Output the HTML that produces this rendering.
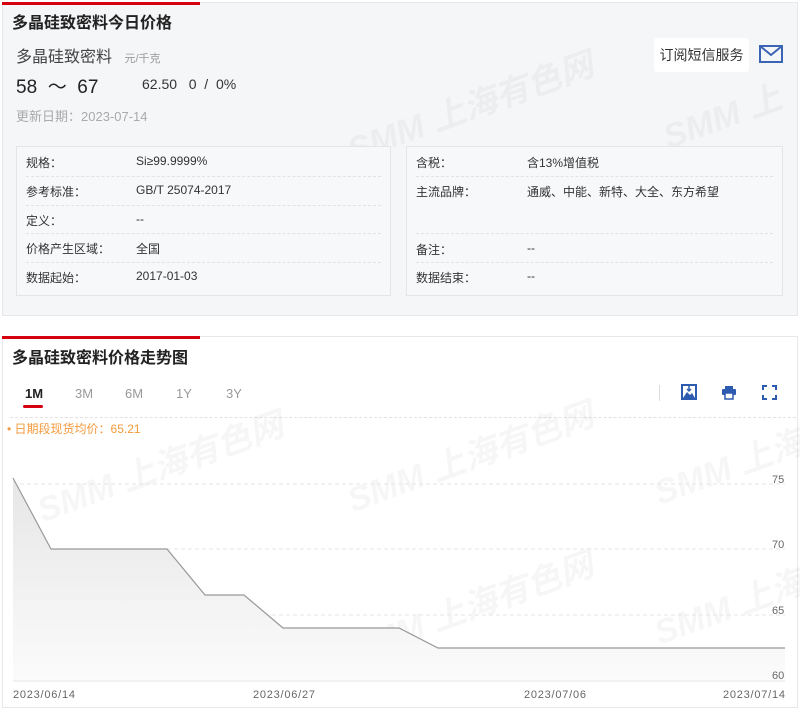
<!DOCTYPE html>
<html><head><meta charset="utf-8"><style>
*{margin:0;padding:0;box-sizing:border-box}
body{width:800px;height:708px;background:#fff;font-family:"Liberation Sans","Noto Sans CJK SC",sans-serif;color:#333;position:relative;overflow:hidden}
.abs{position:absolute}
.p1{left:2px;top:2px;width:796px;height:314px;background:#f5f6f8;border:1px solid #e6e8eb}
.red{height:3px;background:#d7000f;width:198px}
.tbl{background:#f7f8fa;border:1px solid #e3e5e8}
.row{position:absolute;font-size:12px;color:#333}
.dash{position:absolute;height:0;border-top:1px dashed #e2e2e2}
.wm{position:absolute;font-size:34px;font-weight:bold;color:rgba(0,0,0,0.035);transform:rotate(-20deg);white-space:nowrap;font-style:italic}
</style></head><body>
<div class="abs p1"></div>
<div class="abs red" style="left:2px;top:2px"></div>
<div class="wm" style="left:340px;top:80px">SMM 上海有色网</div>
<div class="wm" style="left:660px;top:90px">SMM 上</div>
<div class="abs" style="left:12px;top:9px;font-size:16px;font-weight:bold;color:#222">多晶硅致密料今日价格</div>
<div class="abs" style="left:16px;top:43px;font-size:16px;color:#444">多晶硅致密料 <span style="font-size:11px;color:#999;margin-left:8px">元/千克</span></div>
<div class="abs" style="left:16px;top:72px;font-size:19px;color:#222">58 &nbsp;～ &nbsp;67</div>
<div class="abs" style="left:142px;top:76px;font-size:14px;color:#333">62.50 &nbsp; 0 &nbsp;/ &nbsp;0%</div>
<div class="abs" style="left:16px;top:106px;font-size:13px;color:#aaa">更新日期：2023-07-14</div>
<div class="abs" style="left:654px;top:38px;width:95px;height:34px;background:#fff;border-radius:3px;font-size:14px;line-height:34px;text-align:center;color:#333">订阅短信服务</div>
<svg class="abs" style="left:759px;top:45px" width="24" height="18" viewBox="0 0 24 18"><rect x="1" y="1" width="22" height="16" fill="none" stroke="#3b64b4" stroke-width="2"/><path d="M1 1L12 10L23 1" fill="none" stroke="#3b64b4" stroke-width="2"/></svg>
<div class="abs tbl" style="left:16px;top:146px;width:375px;height:150px"></div>
<div class="abs tbl" style="left:406px;top:146px;width:377px;height:150px"></div>
<div class="dash" style="left:26px;top:176px;width:355px"></div><div class="dash" style="left:26px;top:205px;width:355px"></div><div class="dash" style="left:26px;top:233px;width:355px"></div><div class="dash" style="left:26px;top:262px;width:355px"></div>
<div class="dash" style="left:416px;top:176px;width:357px"></div><div class="dash" style="left:416px;top:233px;width:357px"></div><div class="dash" style="left:416px;top:262px;width:357px"></div>
<div class="row" style="left:26px;top:154px">规格：</div><div class="row" style="left:136px;top:154px">Si≥99.9999%</div>
<div class="row" style="left:26px;top:183px">参考标准：</div><div class="row" style="left:136px;top:183px">GB/T 25074-2017</div>
<div class="row" style="left:26px;top:212px">定义：</div><div class="row" style="left:136px;top:212px">--</div>
<div class="row" style="left:26px;top:240px">价格产生区域：</div><div class="row" style="left:136px;top:240px">全国</div>
<div class="row" style="left:26px;top:269px">数据起始：</div><div class="row" style="left:136px;top:269px">2017-01-03</div>
<div class="row" style="left:416px;top:154px">含税：</div><div class="row" style="left:527px;top:154px">含13%增值税</div>
<div class="row" style="left:416px;top:183px">主流品牌：</div><div class="row" style="left:527px;top:183px">通威、中能、新特、大全、东方希望</div>
<div class="row" style="left:416px;top:241px">备注：</div><div class="row" style="left:527px;top:241px">--</div>
<div class="row" style="left:416px;top:269px">数据结束：</div><div class="row" style="left:527px;top:269px">--</div>

<div class="abs" style="left:2px;top:336px;width:796px;height:372px;border:1px solid #e6e8eb;background:#fff"></div>
<div class="abs red" style="left:2px;top:336px"></div>
<div class="abs" style="left:12px;top:344px;font-size:16px;font-weight:bold;color:#222">多晶硅致密料价格走势图</div>
<div class="abs" style="left:25px;top:386px;font-size:13px;font-weight:bold;color:#222">1M</div>
<div class="abs" style="left:23px;top:405px;width:20px;height:3px;background:#d7000f;border-radius:2px"></div>
<div class="abs" style="left:75px;top:386px;font-size:13px;color:#999">3M</div>
<div class="abs" style="left:125px;top:386px;font-size:13px;color:#999">6M</div>
<div class="abs" style="left:176px;top:386px;font-size:13px;color:#999">1Y</div>
<div class="abs" style="left:226px;top:386px;font-size:13px;color:#999">3Y</div>
<div class="abs" style="left:659px;top:385px;width:1px;height:16px;background:#ddd"></div>
<svg class="abs" style="left:681px;top:384px" width="16" height="16" viewBox="0 0 16 16"><rect x="1" y="1" width="14" height="14" fill="none" stroke="#2d5bb0" stroke-width="2"/><path d="M2 14L6 8L9 11L11 9L14 14Z" fill="#2d5bb0"/><path d="M8 2V7M6 5L8 7L10 5" stroke="#2d5bb0" stroke-width="1.5" fill="none"/></svg>
<svg class="abs" style="left:721px;top:385px" width="16" height="15" viewBox="0 0 16 15"><rect x="4" y="1" width="8" height="3" fill="#2d5bb0"/><rect x="1" y="4" width="14" height="6" rx="1" fill="#2d5bb0"/><rect x="4" y="8" width="8" height="6" fill="#fff" stroke="#2d5bb0" stroke-width="1.5"/></svg>
<svg class="abs" style="left:762px;top:385px" width="15" height="15" viewBox="0 0 15 15" fill="none" stroke="#2d5bb0" stroke-width="2"><path d="M1 5V1H5M10 1H14V5M14 10V14H10M5 14H1V10"/></svg>
<div class="dash" style="left:10px;top:417px;width:786px"></div>
<div class="abs" style="left:7px;top:420px;font-size:12px;color:#f39a3c">• 日期段现货均价：65.21</div>
<div class="wm" style="left:30px;top:440px">SMM 上海有色网</div>
<div class="wm" style="left:340px;top:430px">SMM 上海有色网</div>
<div class="wm" style="left:650px;top:440px">SMM 上海</div>
<div class="wm" style="left:340px;top:580px">SMM 上海有色网</div>
<div class="wm" style="left:650px;top:580px">SMM 上海</div>
<svg class="abs" style="left:0;top:0" width="800" height="708">
<defs><linearGradient id="g" x1="0" y1="0" x2="0" y2="1"><stop offset="0" stop-color="#e6e6e6"/><stop offset="1" stop-color="#fbfbfb"/></linearGradient></defs>
<g stroke="#e6e6e6" stroke-dasharray="4 3"><line x1="13" y1="484" x2="785" y2="484"/><line x1="13" y1="549" x2="785" y2="549"/><line x1="13" y1="615" x2="785" y2="615"/></g>
<path d="M13 478L51 549L167 549L205 595L244 595L283 628L399 628L438 648L785 648L785 681L13 681Z" fill="url(#g)"/>
<path d="M13 478L51 549L167 549L205 595L244 595L283 628L399 628L438 648L785 648" fill="none" stroke="#999" stroke-width="1.2"/>
<line x1="13" y1="681" x2="785" y2="681" stroke="#e6e6e6"/>
<g font-family="Liberation Sans,sans-serif" font-size="11" fill="#666"><text x="13" y="698" textLength="62">2023/06/14</text><text x="253" y="698" textLength="62">2023/06/27</text><text x="524" y="698" textLength="62">2023/07/06</text><text x="723" y="698" textLength="62">2023/07/14</text>
<text x="772" y="483">75</text><text x="772" y="548">70</text><text x="772" y="614">65</text><text x="772" y="679">60</text></g>
</svg>
</body></html>
